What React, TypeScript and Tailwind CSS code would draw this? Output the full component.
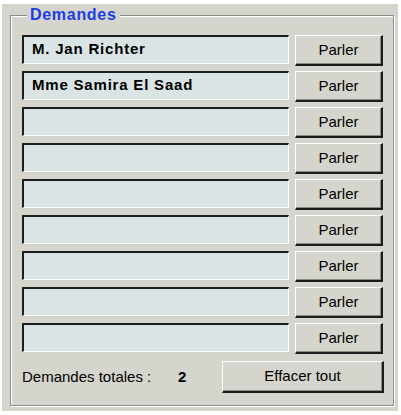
import React from "react";

const names = ["M. Jan Richter", "Mme Samira El Saad", "", "", "", "", "", "", ""];

function Button({ label, className }: { label: string; className?: string }) {
  return (
    <button
      className={
        "flex items-center justify-center bg-[#d5d5cd] border-t border-l border-white border-r-2 border-b-2 border-r-[#1c1c1c] border-b-[#1c1c1c] shadow-[inset_-1px_-1px_0_#8a8a86] text-[15px] text-black " +
        (className ?? "")
      }
    >
      {label}
    </button>
  );
}

export default function App() {
  return (
    <div className="w-[401px] h-[415px] bg-white pt-[4px] pl-[2px] font-['Liberation_Sans',Arial,sans-serif]">
      <div className="w-[396px] h-[407px] bg-[#d5d5cd] pt-[11px] pl-[8px]">
        {/* Group box */}
        <div className="relative w-[384px] h-[391px] border border-[#8c8c88] shadow-[inset_1px_1px_0_white,1px_1px_0_white] pt-[19px] pl-[11px]">
          <span className="absolute -top-[10px] left-[16px] px-[3px] bg-[#d5d5cd] text-[16px] leading-[18px] font-bold tracking-[0.7px] text-[#1c3ce8]">
            Demandes
          </span>

          <div className="flex flex-col gap-[5px]">
            {names.map((name, i) => (
              <div key={i} className="flex items-start gap-[6px]">
                <div className="w-[267px] h-[29px] bg-[#dbe4e4] border-t-2 border-l-2 border-[#1e1e1e] border-r border-b border-r-white border-b-white flex items-center pl-[8px] pb-[2px] text-[15px] font-bold tracking-[0.8px] text-black">
                  {name}
                </div>
                <Button label="Parler" className="w-[88px] h-[31px]" />
              </div>
            ))}
          </div>

          {/* Footer */}
          <div className="flex items-center mt-[7px] pr-[9px]">
            <span className="text-[15px] text-black w-[156px]">Demandes totales :</span>
            <span className="text-[15px] font-bold text-black">2</span>
            <Button label="Effacer tout" className="ml-auto w-[162px] h-[32px]" />
          </div>
        </div>
      </div>
    </div>
  );
}
